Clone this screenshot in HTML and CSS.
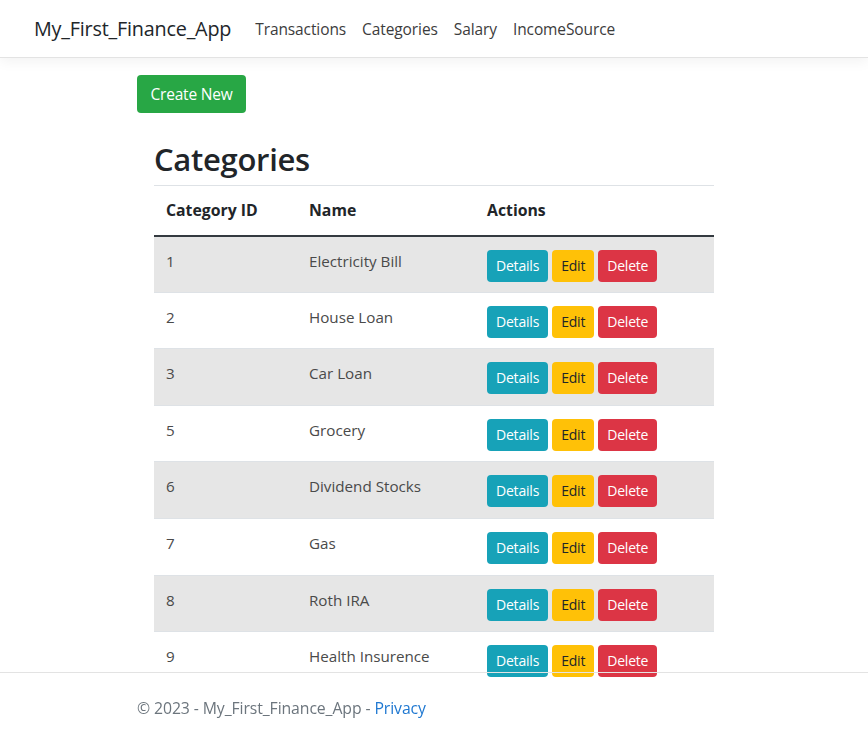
FILE: index.html
```html
<!DOCTYPE html>
<html>
<head>
<meta charset="utf-8">
<link rel="stylesheet" href="styles.css">
</head>
<body>
<header class="navbar">
  <a class="brand" href="#">My_First_Finance_App</a>
  <nav class="nav">
    <a href="#">Transactions</a>
    <a href="#">Categories</a>
    <a href="#">Salary</a>
    <a href="#">IncomeSource</a>
  </nav>
</header>
<main class="container">
  <a class="btn btn-create" href="#">Create New</a>
  <section class="panel">
    <h1 class="title">Categories</h1>
    <table class="table">
      <thead>
        <tr><th class="c-id">Category ID</th><th class="c-name">Name</th><th>Actions</th></tr>
      </thead>
      <tbody>
        <tr><td>1</td><td>Electricity Bill</td><td class="actions"><a class="btn btn-info">Details</a><a class="btn btn-warning">Edit</a><a class="btn btn-danger">Delete</a></td></tr>
        <tr><td>2</td><td>House Loan</td><td class="actions"><a class="btn btn-info">Details</a><a class="btn btn-warning">Edit</a><a class="btn btn-danger">Delete</a></td></tr>
        <tr><td>3</td><td>Car Loan</td><td class="actions"><a class="btn btn-info">Details</a><a class="btn btn-warning">Edit</a><a class="btn btn-danger">Delete</a></td></tr>
        <tr><td>5</td><td>Grocery</td><td class="actions"><a class="btn btn-info">Details</a><a class="btn btn-warning">Edit</a><a class="btn btn-danger">Delete</a></td></tr>
        <tr><td>6</td><td>Dividend Stocks</td><td class="actions"><a class="btn btn-info">Details</a><a class="btn btn-warning">Edit</a><a class="btn btn-danger">Delete</a></td></tr>
        <tr><td>7</td><td>Gas</td><td class="actions"><a class="btn btn-info">Details</a><a class="btn btn-warning">Edit</a><a class="btn btn-danger">Delete</a></td></tr>
        <tr><td>8</td><td>Roth IRA</td><td class="actions"><a class="btn btn-info">Details</a><a class="btn btn-warning">Edit</a><a class="btn btn-danger">Delete</a></td></tr>
        <tr><td>9</td><td>Health Insurence</td><td class="actions"><a class="btn btn-info">Details</a><a class="btn btn-warning">Edit</a><a class="btn btn-danger">Delete</a></td></tr>
      </tbody>
    </table>
  </section>
</main>
<footer class="footer">
  <div class="footer-inner">© 2023 - My_First_Finance_App - <a href="#">Privacy</a></div>
</footer>
</body>
</html>
```

FILE: styles.css
```css
* { box-sizing: border-box; }
html, body { margin: 0; padding: 0; }
body {
  font-family: "Open Sans", "Noto Sans", sans-serif;
  font-size: 15px;
  color: #212529;
  background: #fff;
  height: 741px;
  overflow: hidden;
}
a { text-decoration: none; }

.navbar {
  height: 58px;
  display: flex;
  align-items: center;
  padding: 0 34px;
  border-bottom: 1px solid #e3e3e3;
  box-shadow: 0 4px 12px rgba(0,0,0,0.05);
  position: relative;
  z-index: 1;
}
.brand {
  font-size: 19.8px;
  color: #212529;
  margin-right: 24px;
  letter-spacing: -0.2px;
}
.nav { display: flex; gap: 16px; }
.nav a {
  color: #3c3c3c;
  font-size: 15.5px;
  letter-spacing: -0.1px;
}

.container {
  padding: 17px 0 0 137px;
}
.btn {
  display: inline-flex;
  align-items: center;
  justify-content: center;
  border-radius: 4px;
  color: #fff;
  cursor: pointer;
}
.btn-create {
  background: #28a745;
  width: 109px;
  height: 38px;
  font-size: 15.5px;
  letter-spacing: -0.2px;
}
.panel {
  width: 560px;
  margin-left: 17px;
  margin-top: 26px;
}
.title {
  font-size: 31px;
  font-weight: 600;
  margin: 0 0 6px 0;
  line-height: 40px;
  letter-spacing: -0.3px;
}
.table {
  width: 100%;
  border-collapse: collapse;
}
.table th, .table td {
  text-align: left;
  padding: 0 12px;
  border-top: 1px solid #dee2e6;
}
.table th {
  font-weight: 700;
  font-size: 15.8px;
  height: 50px;
  border-bottom: 2px solid #343a40;
  letter-spacing: 0;
}
.c-id { width: 143px; }
.c-name { width: 178px; }
.table td {
  height: 56.6px;
  color: #4a4a4a;
  vertical-align: top;
  padding-top: 12px;
  line-height: 24px;
  font-size: 15.2px;
}
.table tbody tr:nth-child(odd) td { background: #e6e6e6; }
.table td.actions { padding-top: 13px; }
.actions .btn {
  height: 32px;
  font-size: 14px;
  margin-right: 4px;
  padding: 0 9px;
  letter-spacing: -0.2px;
  vertical-align: top;
}
.btn-info { background: #17a2b8; }
.btn-warning { background: #ffc107; color: #212529; }
.btn-danger { background: #dc3545; }

.footer {
  position: fixed;
  left: 0;
  right: 0;
  bottom: 0;
  height: 69px;
  border-top: 1px solid #e3e3e3;
}
.footer-inner {
  padding-left: 137px;
  padding-top: 24px;
  font-size: 15.8px;
  color: #6c757d;
  letter-spacing: -0.1px;
}
.footer-inner a { color: #1f78d1; }
```
